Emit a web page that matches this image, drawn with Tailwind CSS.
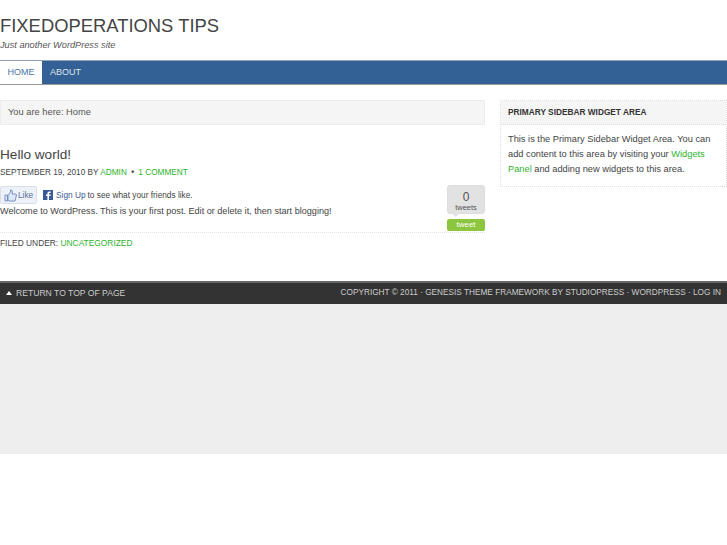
<!DOCTYPE html>
<html lang="en">
  <head>
    <meta charset="UTF-8" />
    <title>FixedOperations Tips</title>
    <script src="https://cdn.jsdelivr.net/npm/@tailwindcss/browser@4"></script>
  </head>
  <body class="bg-white font-['Liberation_Sans',Arial,sans-serif] text-[#444]">
    <!-- header -->
    <div class="h-[60px] pt-[14px]">
      <h1 class="text-[18.4px] leading-[23px] font-normal text-[#444]">FIXEDOPERATIONS TIPS</h1>
      <p class="text-[9.2px] leading-[14px] mt-[1px] italic text-[#555]">Just another WordPress site</p>
    </div>

    <!-- nav -->
    <div class="h-[25px] bg-[#336195] border-t border-[#8fa3ba] border-b border-b-[#999] flex text-[9px]">
      <a class="bg-white text-[#4a74a5] w-[42px] text-center leading-[23px]">HOME</a>
      <a class="text-[#dfe6ef] pl-[8px] leading-[23px]">ABOUT</a>
    </div>

    <!-- content -->
    <div class="flex justify-between mt-[15px] h-[181px]">
      <div class="w-[485px]">
        <div class="h-[25px] bg-[#f5f5f5] border border-dotted border-[#e2e2e2] pl-[7px] text-[9.3px] leading-[22px] text-[#555]">You are here: Home</div>

        <h2 class="text-[13.6px] leading-[18px] font-normal mt-[21px] text-[#444]">Hello world!</h2>
        <div class="text-[8.25px] leading-[12px] mt-[3px] text-[#444]">
          SEPTEMBER 19, 2010 BY <a class="text-[#2db32d]">ADMIN</a>
          <span class="mx-[2px] font-bold">•</span>
          <a class="text-[#2db32d]">1 COMMENT</a>
        </div>

        <div class="relative">
          <div class="flex items-center h-[18px] mt-[7px] text-[8.3px]">
            <span class="w-[37px] h-[18px] bg-[#eef1f8] border border-[#d8dfea] rounded-[2px] flex items-center pl-[3px] text-[#5a6f9f]">
              <svg width="13" height="13" viewBox="0 0 13 13" class="shrink-0"><path d="M1 6h2.500v6H1zM4 6.500 6.500 3V1h1.200L8.500 3 8 5h3.800l.7 1-1.500 6H5l-1-.8z" fill="#dfe6f5" stroke="#5f80bd" stroke-width="0.8" /></svg>
              <span class="ml-[1px]">Like</span>
            </span>
            <svg width="10" height="10" viewBox="0 0 10 10" class="ml-[6px] shrink-0"><rect width="10" height="10" fill="#3b5998" /><path d="M6 10V6h1.500l.2-1.500H6V3.600c0-.5.200-.7.700-.7h1V1.500H6.400C5 1.500 4.400 2.300 4.400 3.500v1H3V6h1.400v4z" fill="#fff" /></svg>
            <a class="text-[#3b5998] ml-[3px]">Sign Up</a>
            <span class="ml-[2px] text-[#444]">to see what your friends like.</span>
          </div>
          <p class="text-[9.1px] leading-[14px] text-[#444]">Welcome to WordPress. This is your first post. Edit or delete it, then start blogging!</p>

          <!-- tweet button -->
          <div class="absolute right-0 top-[-1px] w-[38px]">
            <div class="relative h-[29px] bg-[#e2e2e2] border border-[#ddd] rounded-[3px] text-center text-[#555]">
              <div class="text-[12px] leading-[13px] mt-[5px]">0</div>
              <div class="text-[7.500px] leading-[8px]">tweets</div>
              <div class="absolute left-[5px] -bottom-[3px] w-[5px] h-[5px] bg-[#e2e2e2] rotate-45"></div>
            </div>
            <div class="h-[12px] mt-[5px] bg-[#8cc63f] rounded-[2px] text-center text-white text-[8px] leading-[12px]">tweet</div>
          </div>
        </div>

        <div class="border-t border-dotted border-[#e2e2e2] mt-[14px] pt-[4px] text-[8.4px] leading-[12px] text-[#444]">
          FILED UNDER: <a class="text-[#2db32d]">UNCATEGORIZED</a>
        </div>
      </div>

      <!-- sidebar -->
      <div class="w-[227px] h-[87px] border border-dotted border-[#ddd]">
        <h4 class="h-[24px] bg-[#f5f5f5] border-b border-dotted border-[#ddd] pl-[7px] text-[8.3px] leading-[22px] font-bold text-[#333]">PRIMARY SIDEBAR WIDGET AREA</h4>
        <p class="px-[7px] pt-[7px] text-[9.27px] leading-[15px] text-[#444]">This is the Primary Sidebar Widget Area. You can add content to this area by visiting your <a class="text-[#2db32d]">Widgets Panel</a> and adding new widgets to this area.</p>
      </div>
    </div>

    <!-- footer -->
    <div class="h-[23px] bg-[#333] border-t-2 border-[#666] flex justify-between items-center px-[6px] pb-[1px] text-[#ccc]">
      <div class="flex items-center text-[8.6px]">
        <span class="w-0 h-0 border-x-[3.500px] border-x-transparent border-b-[4px] border-b-white mr-[4px]"></span>
        <span>RETURN TO TOP OF PAGE</span>
      </div>
      <div class="text-[8.26px]">COPYRIGHT © 2011 · GENESIS THEME FRAMEWORK BY STUDIOPRESS · WORDPRESS · LOG IN</div>
    </div>
    <div class="h-[150px] bg-[#eee]"></div>
  </body>
</html>
